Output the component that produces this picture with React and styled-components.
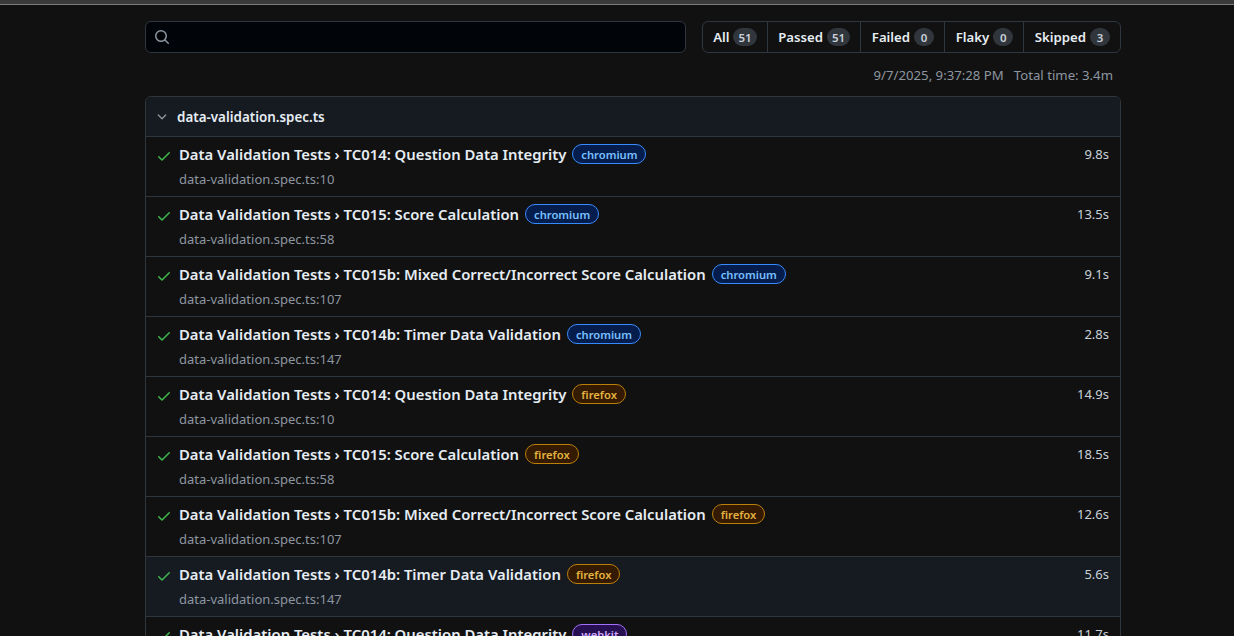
import React from "react";
import styled, { createGlobalStyle } from "styled-components";

const Global = createGlobalStyle`
  html, body { margin: 0; padding: 0; background: #111111; }
  body {
    font-family: "Noto Sans", "Open Sans", "Liberation Sans", sans-serif;
    color: #e6edf3;
    overflow: hidden;
  }
  * { box-sizing: border-box; }
`;

const TopStrip = styled.div`
  height: 5px;
  background: #3a3a3a;
  border-bottom: 1px solid #7d7d7d;
`;

const Main = styled.main`
  width: 1008px;
  margin: 0 auto;
  padding: 16px 0 0 32px;
`;

const Toolbar = styled.div`
  display: flex;
  gap: 16px;
  align-items: stretch;
  height: 32px;
`;

const Search = styled.label`
  flex: 1;
  display: flex;
  align-items: center;
  gap: 8px;
  padding: 0 8px;
  background: #010409;
  border: 1px solid #30363d;
  border-radius: 6px;
  color: #8d96a0;
`;

const SearchInput = styled.input`
  flex: 1;
  background: transparent;
  border: none;
  outline: none;
  color: #e6edf3;
  font: inherit;
  font-size: 14px;
`;

const Filters = styled.nav`
  display: flex;
  border: 1px solid #30363d;
  border-radius: 6px;
  overflow: hidden;
`;

const FilterItem = styled.a`
  display: flex;
  align-items: center;
  gap: 4px;
  padding: 0 10px 0 10.6px;
  font-size: 13.2px;
  font-weight: 600;
  color: #e6edf3;
  text-decoration: none;
  border-left: ${(p) => (p.$first ? "none" : "1px solid #30363d")};
`;

const Counter = styled.span`
  display: inline-flex;
  align-items: center;
  justify-content: center;
  min-width: 20px;
  height: 18px;
  padding: 0 5px;
  border-radius: 9px;
  background: #31363d;
  color: #c9d1d9;
  font-size: 11.5px;
  font-weight: 600;
`;

const Meta = styled.div`
  display: flex;
  justify-content: flex-end;
  gap: 10px;
  padding: 12px 8px 0 0;
  height: 43px;
  font-size: 13.2px;
  color: #8d96a0;
  line-height: 20px;
`;

const Chip = styled.section`
  border: 1px solid #30363d;
  border-radius: 6px;
  overflow: hidden;
`;

const ChipHeader = styled.header`
  display: flex;
  align-items: center;
  gap: 8px;
  height: 39px;
  padding: 0 9px;
  background: #161b22;
  font-size: 13.4px;
  font-weight: 600;
  color: #e6edf3;
`;

const Row = styled.div`
  display: flex;
  height: 60px;
  padding: 6px 10px 0 10px;
  border-top: 1px solid #30363d;
  background: ${(p) => (p.$hover ? "#161b22" : "#111111")};
`;

const CheckCell = styled.div`
  width: 23px;
  padding-top: 4px;
  color: #3fb950;
  flex: none;
`;

const RowBody = styled.div`
  flex: 1;
  display: flex;
  flex-direction: column;
`;

const TitleLine = styled.div`
  display: flex;
  align-items: center;
  gap: 6px;
  height: 22px;
  font-size: 14.85px;
  font-weight: 600;
  color: #e6edf3;
  white-space: nowrap;
`;

const Location = styled.div`
  margin-top: 4px;
  font-size: 13px;
  color: #8d96a0;
  line-height: 20px;
`;

const Duration = styled.div`
  font-size: 13px;
  color: #c9d1d9;
  line-height: 22px;
  padding-right: 1px;
`;

const labelColors = {
  chromium: { bg: "#051d4d", border: "#388bfd", fg: "#79c0ff" },
  firefox: { bg: "#341a00", border: "#bb8009", fg: "#e3b341" },
  webkit: { bg: "#271052", border: "#a371f7", fg: "#d2a8ff" },
};

const Label = styled.span`
  display: inline-flex;
  align-items: center;
  height: 20px;
  padding: 0 8px;
  border-radius: 10px;
  font-size: 11.2px;
  font-weight: 600;
  background: ${(p) => labelColors[p.$kind].bg};
  border: 1px solid ${(p) => labelColors[p.$kind].border};
  color: ${(p) => labelColors[p.$kind].fg};
`;

const SearchIcon = () => (
  <svg width="16" height="16" viewBox="0 0 16 16" fill="currentColor">
    <path d="M10.68 11.74a6 6 0 0 1-7.922-8.982 6 6 0 0 1 8.982 7.922l3.04 3.04a.749.749 0 0 1-.326 1.275.749.749 0 0 1-.734-.215ZM11.5 7a4.499 4.499 0 1 0-8.997 0A4.499 4.499 0 0 0 11.5 7Z" />
  </svg>
);

const Chevron = () => (
  <svg width="14" height="14" viewBox="0 0 16 16" fill="#8d96a0">
    <path d="M12.78 5.22a.749.749 0 0 1 0 1.06l-4.25 4.250a.749.749 0 0 1-1.06 0L3.22 6.28a.749.749 0 1 1 1.06-1.06L8 8.939l3.72-3.719a.749.749 0 0 1 1.06 0Z" />
  </svg>
);

const Check = () => (
  <svg width="16" height="16" viewBox="0 0 16 16" fill="currentColor">
    <path d="M13.78 4.22a.75.75 0 0 1 0 1.06l-7.25 7.25a.75.75 0 0 1-1.06 0L2.22 9.28a.751.751 0 0 1 .018-1.042.751.751 0 0 1 1.042-.018L6 10.94l6.72-6.72a.75.75 0 0 1 1.06 0Z" />
  </svg>
);

const filters = [
  ["All", 51],
  ["Passed", 51],
  ["Failed", 0],
  ["Flaky", 0],
  ["Skipped", 3],
];

const base = [
  ["TC014: Question Data Integrity", 10],
  ["TC015: Score Calculation", 58],
  ["TC015b: Mixed Correct/Incorrect Score Calculation", 107],
  ["TC014b: Timer Data Validation", 147],
];
const durations = ["9.8s", "13.5s", "9.1s", "2.8s", "14.9s", "18.5s", "12.6s", "5.6s", "11.7s", "10.2s", "8.4s", "3.1s"];
const browsers = ["chromium", "firefox", "webkit"];
const tests = browsers.flatMap((b, bi) =>
  base.map(([name, line], i) => ({
    name,
    line,
    browser: b,
    duration: durations[bi * 4 + i],
  }))
);

export default function App() {
  return (
    <>
      <Global />
      <TopStrip />
      <Main>
        <Toolbar>
          <Search>
            <SearchIcon />
            <SearchInput type="search" aria-label="Search tests" />
          </Search>
          <Filters>
            {filters.map(([name, n], i) => (
              <FilterItem key={name} $first={i === 0} href="#">
                {name}
                <Counter>{n}</Counter>
              </FilterItem>
            ))}
          </Filters>
        </Toolbar>
        <Meta>
          <span>9/7/2025, 9:37:28 PM</span>
          <span>Total time: 3.4m</span>
        </Meta>
        <Chip>
          <ChipHeader>
            <Chevron />
            data-validation.spec.ts
          </ChipHeader>
          {tests.map((t, i) => (
            <Row key={i} $hover={i === 7}>
              <CheckCell>
                <Check />
              </CheckCell>
              <RowBody>
                <TitleLine>
                  Data Validation Tests › {t.name}
                  <Label $kind={t.browser}>{t.browser}</Label>
                </TitleLine>
                <Location>data-validation.spec.ts:{t.line}</Location>
              </RowBody>
              <Duration>{t.duration}</Duration>
            </Row>
          ))}
        </Chip>
      </Main>
    </>
  );
}
